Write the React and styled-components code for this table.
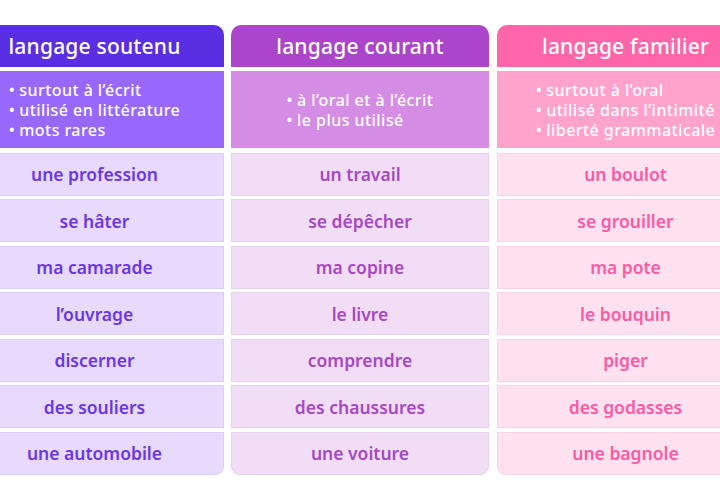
import React from 'react'
import styled, { createGlobalStyle } from 'styled-components'

const GlobalStyle = createGlobalStyle`
  body {
    margin: 0;
    background: #ffffff;
    overflow: hidden;
    font-family: "Noto Sans", "Open Sans", sans-serif;
  }
`

const columns = [
  {
    title: 'langage soutenu',
    head: '#5a2ee3',
    desc: '#9868fc',
    cell: '#e7dafd',
    edge: '#ddcdfb',
    text: '#6b37e6',
    notes: ['surtout à l’écrit', 'utilisé en littérature', 'mots rares'],
    words: ['une profession', 'se hâter', 'ma camarade', 'l’ouvrage', 'discerner', 'des souliers', 'une automobile'],
  },
  {
    title: 'langage courant',
    head: '#ab45c9',
    desc: '#d58ce5',
    cell: '#f2ddf6',
    edge: '#ead0f1',
    text: '#a648c5',
    notes: ['à l’oral et à l’écrit', 'le plus utilisé'],
    words: ['un travail', 'se dépêcher', 'ma copine', 'le livre', 'comprendre', 'des chaussures', 'une voiture'],
  },
  {
    title: 'langage familier',
    head: '#ff65a9',
    desc: '#ffa3cd',
    cell: '#ffe1ef',
    edge: '#fcd3e6',
    text: '#fb5aa5',
    notes: ['surtout à l’oral', 'utilisé dans l’intimité', 'liberté grammaticale'],
    words: ['un boulot', 'se grouiller', 'ma pote', 'le bouquin', 'piger', 'des godasses', 'une bagnole'],
  },
]

const Page = styled.div`
  display: flex;
  justify-content: center;
  padding-top: 25px;
`
const Table = styled.div`
  flex: none;
  width: 789px;
  display: grid;
  grid-template-columns: repeat(3, 258px);
  column-gap: 7.5px;
`
const Column = styled.div`
  display: flex;
  flex-direction: column;
`
const Header = styled.div`
  height: 42px;
  display: flex;
  align-items: center;
  justify-content: center;
  background: ${props => props.color};
  border-radius: 10px 10px 0 0;
  color: #fff;
  font-size: 21px;
  font-weight: 500;
  letter-spacing: 0.2px;
  padding-bottom: 1px;
  box-sizing: border-box;
`
const Desc = styled.div`
  margin-top: 4px;
  height: 77px;
  display: flex;
  align-items: center;
  justify-content: center;
  background: ${props => props.color};
`
const Notes = styled.ul`
  margin: 0;
  padding: 0;
  list-style: none;
  color: #fff;
  font-size: 16px;
  font-weight: 500;
  line-height: 20px;
  letter-spacing: 0.45px;
`
const Note = styled.li`
  &::before {
    content: '•';
    margin-right: 4px;
  }
`
const Rows = styled.div`
  margin-top: 4.5px;
  display: flex;
  flex-direction: column;
  gap: 3.5px;
`
const Cell = styled.div`
  height: 43px;
  display: flex;
  align-items: center;
  justify-content: center;
  background: ${props => props.color};
  box-shadow: inset 0 0 0 1px ${props => props.edge};
  color: ${props => props.text};
  font-size: 17.5px;
  font-weight: 600;

  &:last-child {
    border-radius: 0 0 9px 9px;
  }
`

const App = () => {
  return (
    <Page>
      <GlobalStyle />
      <Table>
        {columns.map(col => (
          <Column key={col.title}>
            <Header color={col.head}>{col.title}</Header>
            <Desc color={col.desc}>
              <Notes>
                {col.notes.map(n => <Note key={n}>{n}</Note>)}
              </Notes>
            </Desc>
            <Rows>
              {col.words.map(w => (
                <Cell key={w} color={col.cell} edge={col.edge} text={col.text}>{w}</Cell>
              ))}
            </Rows>
          </Column>
        ))}
      </Table>
    </Page>
  )
}

export default App
